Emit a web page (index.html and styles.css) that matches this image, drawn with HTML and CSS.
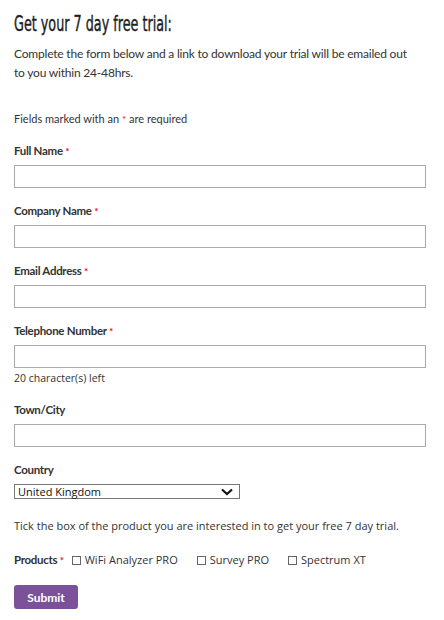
FILE: index.html
```html
<!DOCTYPE html>
<html>
<head>
<meta charset="utf-8">
<link rel="stylesheet" href="styles.css">
</head>
<body>
<div class="page">
  <h1 class="title"><span class="title-text">Get your 7 day free trial:</span></h1>
  <p class="intro">Complete the form below and a link to download your trial will be emailed out to you within 24-48hrs.</p>
  <p class="note">Fields marked with an <span class="req">*</span> are required</p>
  <form class="form">
    <div class="field">
      <label class="label">Full Name <span class="req">*</span></label>
      <input class="input" type="text">
    </div>
    <div class="field">
      <label class="label">Company Name <span class="req">*</span></label>
      <input class="input" type="text">
    </div>
    <div class="field">
      <label class="label">Email Address <span class="req">*</span></label>
      <input class="input" type="text">
    </div>
    <div class="field field-tel">
      <label class="label">Telephone Number <span class="req">*</span></label>
      <input class="input" type="text">
      <div class="hint">20 character(s) left</div>
    </div>
    <div class="field">
      <label class="label">Town/City</label>
      <input class="input" type="text">
    </div>
    <div class="field field-country">
      <label class="label">Country</label>
      <div class="select">
        <span class="select-text">United Kingdom</span>
        <svg class="chev" width="12" height="8" viewBox="0 0 12 8"><path d="M1 1.5 L6 6 L11 1.5" fill="none" stroke="#111" stroke-width="2.2"/></svg>
      </div>
    </div>
    <p class="tick">Tick the box of the product you are interested in to get your free 7 day trial.</p>
    <div class="products">
      <span class="label plabel">Products <span class="req">*</span></span>
      <span class="opt"><span class="box"></span>WiFi Analyzer PRO</span>
      <span class="opt"><span class="box"></span>Survey PRO</span>
      <span class="opt"><span class="box"></span>Spectrum XT</span>
    </div>
    <button class="submit" type="button">Submit</button>
  </form>
</div>
</body>
</html>
```
FILE: styles.css
```css
html, body { margin: 0; padding: 0; background: #fff; }
body { font-family: Lato, "Noto Sans", sans-serif; color: #333; }
.page { padding: 0 18px 0 14px; }
.title {
  margin: 0;
  padding-top: 11px;
  font-family: "DejaVu Sans Condensed", "DejaVu Sans", sans-serif;
  font-weight: normal;
  font-size: 22px;
  line-height: 25px;
  color: #1e1e1e;
  -webkit-text-stroke: 0.4px #1e1e1e;
}
.title-text {
  display: inline-block;
  transform: scaleX(0.645);
  transform-origin: left center;
  white-space: nowrap;
}
.intro {
  margin: 8px 0 0;
  max-width: 396px;
  font-size: 12px;
  letter-spacing: -0.2px;
  line-height: 19px;
  color: #333;
}
.note {
  margin: 29px 0 0;
  font-size: 11px;
  line-height: 16px;
  color: #333;
}
.req { color: #e0141e; font-size: 10px; vertical-align: top; }
.form { margin-top: 16px; }
.field { display: flex; flex-direction: column; margin-bottom: 15px; }
.label {
  font-size: 11.5px;
  font-weight: bold;
  line-height: 16px;
  letter-spacing: -0.3px;
  color: #333;
  margin-bottom: 6px;
}
.input {
  box-sizing: border-box;
  width: 412px;
  height: 23px;
  border: 1px solid #aaa;
  margin: 0;
  padding: 0 4px;
  background: #fff;
}
.field-tel { margin-bottom: 16px; }
.hint {
  font-family: "Open Sans", sans-serif;
  font-size: 10.5px;
  line-height: 16px;
  margin-top: 2px;
  color: #333;
}
.select {
  box-sizing: border-box;
  width: 226px;
  height: 15px;
  border: 1px solid #767676;
  display: flex;
  align-items: center;
  justify-content: space-between;
  padding: 0 6px 0 3px;
}
.select-text {
  font-family: "Open Sans", sans-serif;
  font-size: 11px;
  line-height: 12px;
  color: #111;
}
.chev { display: block; }
.tick {
  margin: 19px 0 0;
  font-family: "Open Sans", sans-serif;
  font-size: 11px;
  line-height: 16px;
  color: #333;
}
.products {
  display: flex;
  align-items: center;
  margin-top: 18px;
  line-height: 16px;
}
.plabel { margin: 0 8px 0 0; }
.opt {
  display: inline-flex;
  align-items: center;
  margin-right: 19px;
  color: #333;
  font-family: "Open Sans", sans-serif;
  font-size: 11px;
}
.box {
  box-sizing: border-box;
  width: 9px;
  height: 9px;
  border: 1px solid #666;
  margin-right: 4px;
}
.submit {
  margin-top: 17px;
  width: 64px;
  height: 24px;
  background: #7b5299;
  color: #fff;
  border: none;
  border-radius: 3px;
  font-family: Lato, sans-serif;
  font-weight: bold;
  font-size: 12px;
  padding: 0;
}
```
